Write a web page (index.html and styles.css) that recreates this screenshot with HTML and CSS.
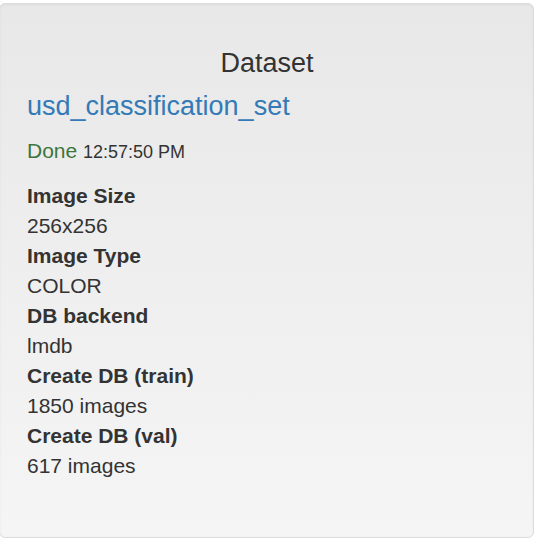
FILE: index.html
```html
<!DOCTYPE html>
<html>
<head>
<meta charset="utf-8">
<link rel="stylesheet" href="styles.css">
</head>
<body>
<div class="well">
  <h4 class="title">Dataset</h4>
  <a class="name" href="#">usd_classification_set</a>
  <div class="status"><span class="done">Done</span> <small class="time">12:57:50 PM</small></div>
  <dl class="info">
    <dt>Image Size</dt>
    <dd>256x256</dd>
    <dt>Image Type</dt>
    <dd>COLOR</dd>
    <dt>DB backend</dt>
    <dd>lmdb</dd>
    <dt>Create DB (train)</dt>
    <dd>1850 images</dd>
    <dt>Create DB (val)</dt>
    <dd>617 images</dd>
  </dl>
</div>
</body>
</html>
```
FILE: styles.css
```css
html, body {
  margin: 0;
  padding: 0;
  background: #ffffff;
}
body {
  font-family: "Liberation Sans", Arial, sans-serif;
  font-size: 21px;
  line-height: 30px;
  color: #333333;
  overflow: hidden;
}
.well {
  box-sizing: border-box;
  margin: 3px 0 0 -1px;
  width: 535px;
  height: 535px;
  padding: 36px 27px 0 27px;
  background: linear-gradient(to bottom, #e8e8e8 0%, #f5f5f5 100%);
  border: 1px solid #dcdcdc;
  border-radius: 6px;
  box-shadow: inset 0 1px 3px rgba(0,0,0,0.05), 0 1px 0 rgba(255,255,255,0.1);
}
.title {
  margin: 0 0 0 1px;
  font-size: 27px;
  font-weight: 500;
  line-height: 46px;
  text-align: center;
}
.name {
  display: block;
  font-size: 27px;
  line-height: 40px;
  color: #337ab7;
  text-decoration: none;
}
.status {
  margin-top: 10px;
  line-height: 30px;
}
.done {
  color: #3c763d;
}
.time {
  font-size: 18px;
  color: #333333;
}
.info {
  margin: 14px 0 0 0;
}
.info dt {
  font-weight: bold;
}
.info dd {
  margin: 0;
}
```
